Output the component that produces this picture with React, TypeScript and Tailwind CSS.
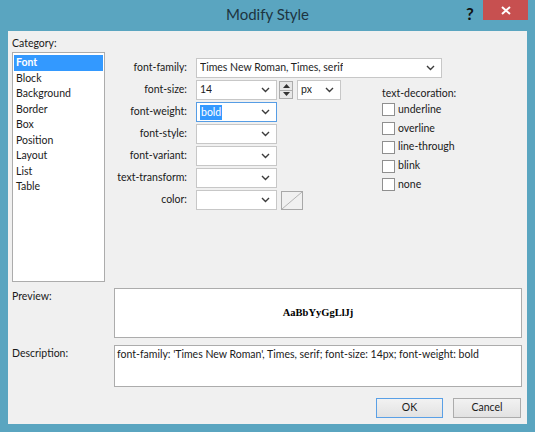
import React from 'react';

const ui = { fontFamily: 'Lato, "Noto Sans", sans-serif' };

const Chevron = () => (
  <svg width="9" height="6" viewBox="0 0 9 6" className="shrink-0">
    <polyline points="1,1 4.5,4.5 8,1" fill="none" stroke="#3c3c3c" strokeWidth="1.4" />
  </svg>
);

// combo box: white field with a chevron on the right
const Combo = ({ w, value, focused, selected }: { w: number; value?: string; focused?: boolean; selected?: boolean }) => (
  <div
    className={`h-[20px] flex items-center justify-between bg-white border pl-[3px] pr-[6px] ${
      focused ? 'border-[#569de5]' : 'border-[#c7c7c7]'
    }`}
    style={{ width: w }}
  >
    {selected ? (
      <span className="bg-[#3399ff] text-white leading-[15px] px-[1px]">{value}</span>
    ) : (
      <span className="text-[#1e1e1e] truncate">{value}</span>
    )}
    <Chevron />
  </div>
);

const Spin = () => (
  <div className="w-[14px] h-[18px] flex flex-col border border-[#acacac] bg-[#e8e8e8]">
    <div className="flex-1 flex items-center justify-center border-b border-[#acacac]">
      <svg width="7" height="4" viewBox="0 0 7 4"><polygon points="0,4 3.5,0 7,4" fill="#333" /></svg>
    </div>
    <div className="flex-1 flex items-center justify-center">
      <svg width="7" height="4" viewBox="0 0 7 4"><polygon points="0,0 3.5,4 7,0" fill="#333" /></svg>
    </div>
  </div>
);

const Check = ({ label }: { label: string }) => (
  <div className="flex items-center gap-[3px] h-[18.7px]">
    <div className="w-[13px] h-[13px] bg-white border border-[#8f8f8f]" />
    <span>{label}</span>
  </div>
);

const Row = ({ label, children }: { label: string; children: React.ReactNode }) => (
  <div className="flex items-center h-[20px]">
    <div className="w-[82px] text-right">{label}</div>
    <div className="ml-[9px] flex items-center gap-[2px]">{children}</div>
  </div>
);

const categories = ['Font', 'Block', 'Background', 'Border', 'Box', 'Position', 'Layout', 'List', 'Table'];

const App: React.FC = () => {
  return (
    <div className="w-[535px] h-[432px] bg-[#5aa5c0] flex flex-col text-[10.5px] text-[#1a1a1a]" style={ui}>
      {/* Title bar */}
      <div className="relative h-[31px] flex items-center justify-center shrink-0">
        <span className="text-[15px] text-[#1d3440] pb-[2px]">Modify Style</span>
        <span className="absolute left-[466px] top-[1px] text-[17px] font-bold text-[#111]">?</span>
        <div className="absolute left-[483px] top-0 w-[45px] h-[20px] bg-[#c75050] flex items-center justify-center">
          <svg width="10" height="9" viewBox="0 0 10 9">
            <path d="M1 1 L9 8 M9 1 L1 8" stroke="#fff" strokeWidth="2" />
          </svg>
        </div>
      </div>

      {/* Client area */}
      <div className="mx-[8px] h-[393px] bg-[#f0f0f0] flex flex-col pl-[4px] pt-[5px]">
        <div className="flex">
          <div className="w-[93px] flex flex-col">
            <div className="h-[16px] leading-[14px]">Category:</div>
            <div className="h-[230px] bg-white border border-[#acacac] p-[1px] pt-[2px]">
              {categories.map((c, i) => (
                <div
                  key={c}
                  className={`h-[15.5px] leading-[15.5px] pl-[2px] ${
                    i === 0 ? 'bg-[#3399ff] text-white font-bold' : ''
                  }`}
                >
                  {c}
                </div>
              ))}
            </div>
          </div>

          <div className="flex flex-col pt-[22px]">
            <Row label="font-family:">
              <Combo w={246} value="Times New Roman, Times, serif" />
            </Row>
            <div className="flex mt-[2px]">
              <div className="w-[277px] flex flex-col gap-[2px]">
                <Row label="font-size:">
                  <Combo w={81} value="14" />
                  <Spin />
                  <div className="ml-[2px]">
                    <Combo w={44} value="px" />
                  </div>
                </Row>
                <Row label="font-weight:">
                  <Combo w={81} value="bold" focused selected />
                </Row>
                <Row label="font-style:">
                  <Combo w={81} />
                </Row>
                <Row label="font-variant:">
                  <Combo w={81} />
                </Row>
                <Row label="text-transform:">
                  <Combo w={81} />
                </Row>
                <Row label="color:">
                  <Combo w={81} />
                  <div className="ml-[2px] w-[22px] h-[19px] border border-[#a8a8a8] bg-[#f0f0f0]">
                    <svg width="20" height="17" viewBox="0 0 20 17">
                      <line x1="0" y1="17" x2="20" y2="0" stroke="#b4b4b4" strokeWidth="1" />
                    </svg>
                  </div>
                </Row>
              </div>
              <div className="flex flex-col pt-[6px]">
                <div className="h-[14.6px] leading-[14px]">text-decoration:</div>
                <Check label="underline" />
                <Check label="overline" />
                <Check label="line-through" />
                <Check label="blink" />
                <Check label="none" />
              </div>
            </div>
          </div>
        </div>

        {/* Preview */}
        <div className="flex mt-[6px]">
          <div className="w-[102px] pt-[1px] leading-[14px]">Preview:</div>
          <div className="w-[408px] h-[50px] bg-white border border-[#acacac] flex items-center justify-center">
            <span className="font-bold text-[10.5px] text-black" style={{ fontFamily: '"Liberation Serif", serif' }}>
              AaBbYyGgLlJj
            </span>
          </div>
        </div>

        {/* Description */}
        <div className="flex mt-[7px]">
          <div className="w-[102px] pt-[1px] leading-[14px]">Description:</div>
          <div className="w-[408px] h-[42px] bg-white border border-[#acacac] px-[2px] pt-[1px] leading-[14px] whitespace-nowrap">
            font-family: 'Times New Roman', Times, serif; font-size: 14px; font-weight: bold
          </div>
        </div>

        {/* Buttons */}
        <div className="flex justify-end gap-[10px] mt-[11px] pr-[6px]">
          <button className="w-[67px] h-[20px] border border-[#5aa0e6] bg-gradient-to-b from-[#f2f2f2] to-[#e2e2e2] text-[#1a1a1a]">
            OK
          </button>
          <button className="w-[68px] h-[20px] border border-[#acacac] bg-gradient-to-b from-[#f2f2f2] to-[#e2e2e2] text-[#1a1a1a]">
            Cancel
          </button>
        </div>
      </div>
    </div>
  );
};

export default App;
